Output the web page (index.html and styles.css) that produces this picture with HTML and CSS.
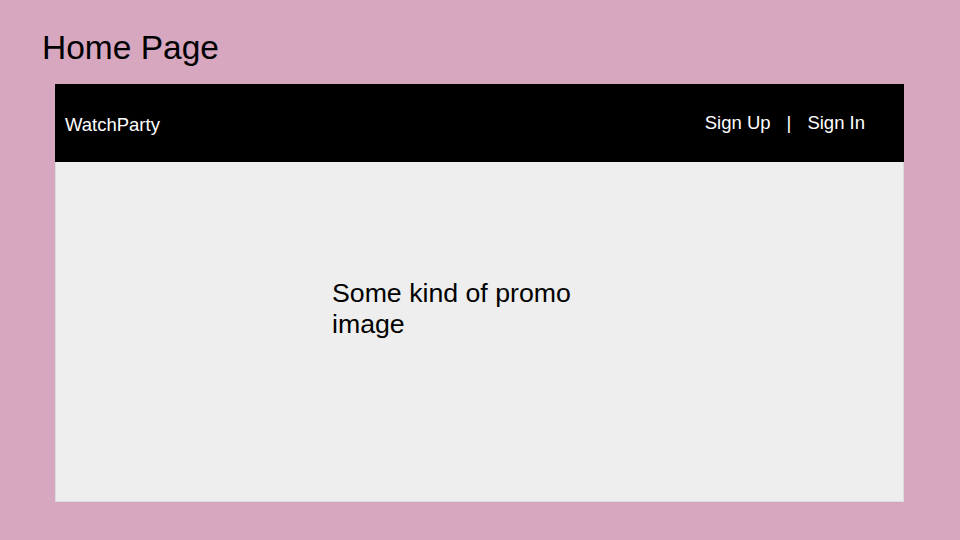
FILE: index.html
```html
<html lang="en">
<head>
    <meta charset="UTF-8">
    <meta name="viewport" content="width=device-width, initial-scale=1.0">
    <title>Home Page</title>
    <link rel="stylesheet" href="styles.css">
</head>
<body>
    <h1 class="pageTitle">Home Page</h1>

    <div class="frame">
        <div class="navbar">
            <p class="brand">WatchParty</p>
            <div class="links">
                <a href="#" class="navLink">Sign Up</a>
                <span class="sep">|</span>
                <a href="#" class="navLink">Sign In</a>
            </div>
        </div>

        <div class="promo">
            <p class="promoText">Some kind of promo image</p>
        </div>
    </div>
</body>
</html>
```

FILE: styles.css
```css
body {
  margin: 0;
  height: 100vh;
  background-color: #d7a7c0;
  font-family: "Liberation Sans", Arial, sans-serif;
  overflow: hidden;
}

p {
  margin: 0;
}

.pageTitle {
  margin: 0;
  padding: 29px 0 0 42px;
  font-size: 33.5px;
  font-weight: 400;
  line-height: 38px;
  color: #000;
}

.frame {
  margin: 17px 0 0 55px;
  width: 849px;
  height: 418px;
  box-sizing: border-box;
  border: 1px solid #dcdcdc;
  background-color: #eeeeee;
  display: flex;
  flex-direction: column;
}

.navbar {
  height: 78px;
  margin: -1px -1px 0 -1px;
  background-color: #000;
  display: flex;
  align-items: center;
  justify-content: space-between;
  padding: 0 39px 0 10px;
  color: #fff;
  font-size: 18.5px;
}

.brand {
  margin-top: 4px;
}

.links {
  display: flex;
  gap: 16px;
}

.navLink {
  color: #fff;
  text-decoration: none;
}

.promo {
  padding: 116px 0 0 276px;
}

.promoText {
  width: 270px;
  font-size: 26.7px;
  line-height: 31px;
  color: #000;
}
```
